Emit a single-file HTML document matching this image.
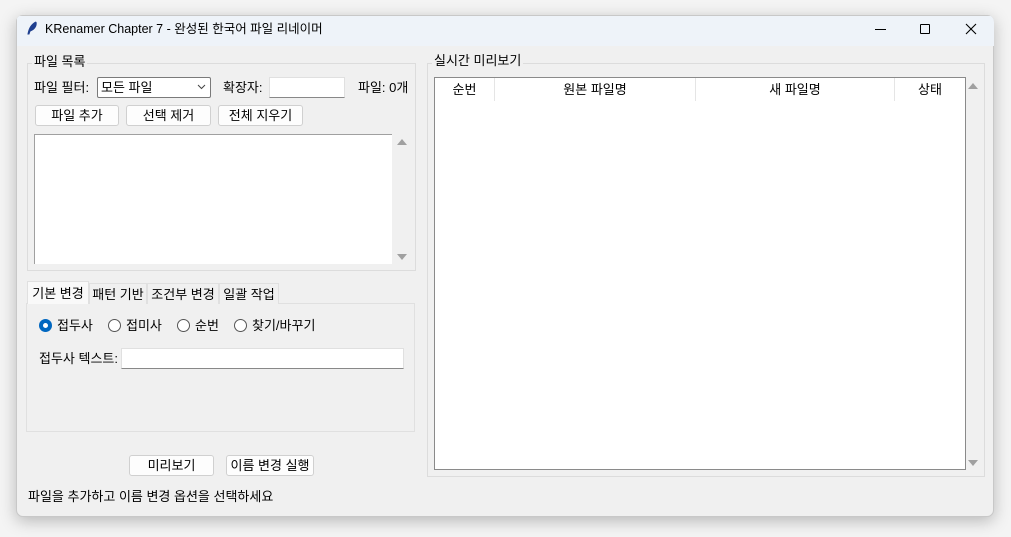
<!DOCTYPE html>
<html><head><meta charset="utf-8">
<style>
*{box-sizing:border-box;margin:0;padding:0}
body{width:1011px;height:537px;background:#f4f4f4;position:relative;overflow:hidden;font-family:"Liberation Sans","Noto Sans CJK KR",sans-serif;font-size:13px;color:#000}
.a{position:absolute;white-space:nowrap;line-height:19px}
.win{position:absolute;left:16px;top:15px;width:978px;height:502px;background:#f0f0f0;border:1px solid #c8c8c8;border-radius:7px;box-shadow:0 4px 16px rgba(0,0,0,.25);overflow:hidden}
.title{position:absolute;left:0;top:0;width:100%;height:30px;background:#eef3f9}
.frame{position:absolute;border:1px solid #dcdcdc}
.lbl{position:absolute;background:#f0f0f0;padding:0 2px;line-height:16px}
.btn{position:absolute;height:21px;border:1px solid #d0d0d0;border-radius:3px;background:#fdfdfd;text-align:center;line-height:20px}
.entry{position:absolute;background:#fff;border:1px solid #e0e0e0;border-bottom:1px solid #888}
.tab{position:absolute;top:283px;height:21px;border:1px solid #e0e0e0;border-bottom:none;text-align:center;line-height:21px;background:#f0f0f0}
.radio{position:absolute;width:13px;height:13px;border:1px solid #555;border-radius:50%;background:#fff}
.up{position:absolute;width:0;height:0;border-left:5px solid transparent;border-right:5px solid transparent;border-bottom:6px solid #a0a0a0}
.dn{position:absolute;width:0;height:0;border-left:5px solid transparent;border-right:5px solid transparent;border-top:6px solid #a0a0a0}
</style></head><body>
<div class="win"></div>
<div style="position:absolute;left:16px;top:15px;width:978px;height:502px;overflow:hidden;border-radius:7px">
<div class="title" style="left:1px;top:1px"></div>
</div>
<svg class="a" style="left:26px;top:21px" width="12" height="14" viewBox="0 0 12 14"><path d="M10 1 C6 3 3 7 2 13 L3 13 C4 9 7 5 10 1Z M10 1 C11 5 8 9 4 10" fill="#1f3f8f" stroke="#1f3f8f" stroke-width="1"/></svg>
<div class="a" style="left:45px;top:20px;font-size:12.5px">KRenamer Chapter 7 - 완성된 한국어 파일 리네이머</div>
<div class="a" style="left:875px;top:29px;width:11px;height:1px;background:#000"></div>
<div class="a" style="left:920px;top:24px;width:10px;height:10px;border:1px solid #000;border-radius:1px"></div>
<svg class="a" style="left:965px;top:23px" width="12" height="12"><path d="M1 1L11 11M11 1L1 11" stroke="#000" stroke-width="1.1"/></svg>

<div class="frame" style="left:27px;top:63px;width:389px;height:208px"></div>
<div class="lbl" style="left:32px;top:54px">파일 목록</div>
<div class="a" style="left:34px;top:78px">파일 필터:</div>
<div class="a" style="left:97px;top:77px;width:114px;height:21px;background:#fff;border:1px solid #7a7a7a;border-radius:2px"></div>
<div class="a" style="left:101px;top:78px">모든 파일</div>
<svg class="a" style="left:197px;top:84px" width="9" height="6"><path d="M1 1L4.5 4.5L8 1" stroke="#444" fill="none"/></svg>
<div class="a" style="left:223px;top:78px">확장자:</div>
<div class="entry" style="left:269px;top:77px;width:76px;height:21px"></div>
<div class="a" style="left:358px;top:78px">파일: 0개</div>
<div class="btn" style="left:35px;top:105px;width:84px">파일 추가</div>
<div class="btn" style="left:126px;top:105px;width:85px">선택 제거</div>
<div class="btn" style="left:218px;top:105px;width:85px">전체 지우기</div>
<div class="a" style="left:34px;top:134px;width:358px;height:130px;background:#fff;border:1px solid #a0a0a0;border-right:none;border-bottom:none"></div>
<div class="up" style="left:397px;top:139px"></div>
<div class="dn" style="left:397px;top:254px"></div>

<div class="a" style="left:26px;top:303px;width:389px;height:129px;border:1px solid #e0e0e0"></div>
<div class="tab" style="left:27px;width:62px;top:281px;height:23px;background:#f9f9f9;z-index:2;line-height:24px">기본 변경</div>
<div class="tab" style="left:89px;width:58px">패턴 기반</div>
<div class="tab" style="left:147px;width:72px">조건부 변경</div>
<div class="tab" style="left:219px;width:60px">일괄 작업</div>
<div class="radio" style="left:39px;top:319px;border:4px solid #0067c0"></div>
<div class="a" style="left:57px;top:316px">접두사</div>
<div class="radio" style="left:108px;top:319px"></div>
<div class="a" style="left:126px;top:316px">접미사</div>
<div class="radio" style="left:177px;top:319px"></div>
<div class="a" style="left:195px;top:316px">순번</div>
<div class="radio" style="left:234px;top:319px"></div>
<div class="a" style="left:252px;top:316px">찾기/바꾸기</div>
<div class="a" style="left:39px;top:349px">접두사 텍스트:</div>
<div class="entry" style="left:121px;top:348px;width:283px;height:21px"></div>

<div class="btn" style="left:129px;top:455px;width:85px">미리보기</div>
<div class="btn" style="left:226px;top:455px;width:88px">이름 변경 실행</div>
<div class="a" style="left:28px;top:487px">파일을 추가하고 이름 변경 옵션을 선택하세요</div>

<div class="frame" style="left:427px;top:63px;width:558px;height:414px"></div>
<div class="lbl" style="left:432px;top:53px">실시간 미리보기</div>
<div class="a" style="left:434px;top:77px;width:532px;height:393px;background:#fff;border:1px solid #8a8a8a"></div>
<div class="a" style="left:435px;top:78px;width:530px;height:23px;background:#fff"></div>
<div class="a" style="left:494px;top:78px;width:1px;height:23px;background:#e5e5e5"></div>
<div class="a" style="left:695px;top:78px;width:1px;height:23px;background:#e5e5e5"></div>
<div class="a" style="left:894px;top:78px;width:1px;height:23px;background:#e5e5e5"></div>
<div class="a" style="left:435px;top:80px;width:59px;text-align:center">순번</div>
<div class="a" style="left:495px;top:80px;width:200px;text-align:center">원본 파일명</div>
<div class="a" style="left:696px;top:80px;width:198px;text-align:center">새 파일명</div>
<div class="a" style="left:895px;top:80px;width:70px;text-align:center">상태</div>
<div class="up" style="left:968px;top:83px"></div>
<div class="dn" style="left:968px;top:460px"></div>
</body></html>
